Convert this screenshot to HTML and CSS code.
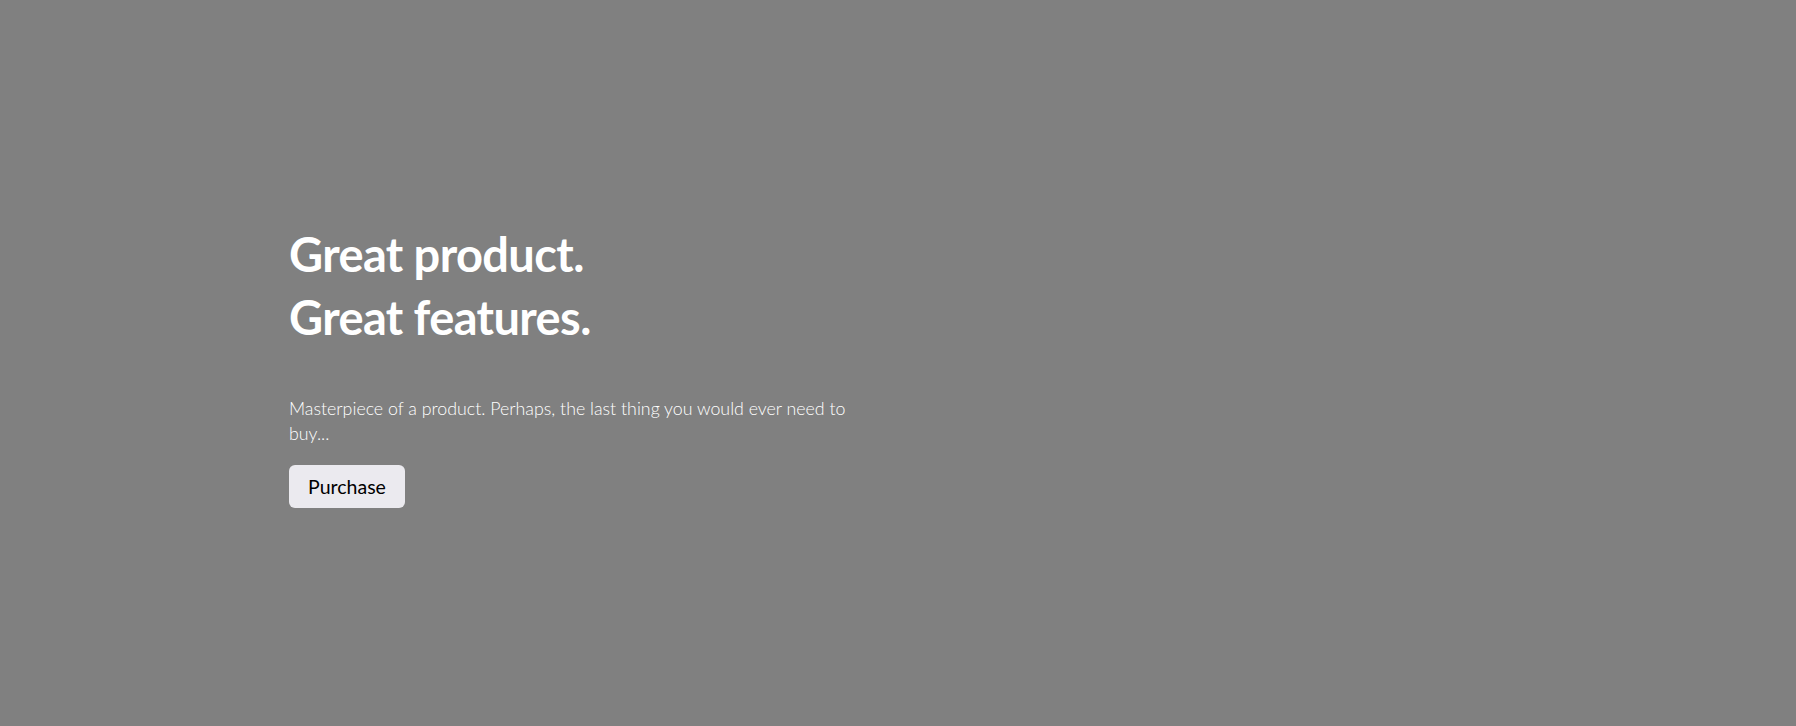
FILE: index.html
```html
<!DOCTYPE html>
<html lang="en">
<head>
<meta charset="utf-8">
<title>Great product</title>
<link rel="stylesheet" href="styles.css">
</head>
<body>
<section class="hero">
  <div class="hero-content">
    <h1 class="hero-title">Great product.<br>Great features.</h1>
    <p class="hero-text">Masterpiece of a product. Perhaps, the last thing you would ever need to buy...</p>
    <button class="hero-button" type="button">Purchase</button>
  </div>
</section>
</body>
</html>
```

FILE: styles.css
```css
* { box-sizing: border-box; }
html, body { margin: 0; padding: 0; }
body {
  background: #808080;
  font-family: "Lato", "Noto Sans", sans-serif;
  height: 100vh;
}
.hero {
  height: 100vh;
  display: flex;
  flex-direction: column;
  justify-content: center;
  padding-left: 289px;
}
.hero-content {
  width: 570px;
  display: flex;
  flex-direction: column;
  align-items: flex-start;
}
.hero-title {
  margin: 5px 0 47px 0;
  font-family: "Lato", sans-serif;
  font-weight: 700;
  font-size: 47px;
  line-height: 63px;
  color: #ffffff;
  letter-spacing: -0.6px;
}
.hero-text {
  margin: 0 0 19px 0;
  font-family: "Lato", sans-serif;
  font-weight: 300;
  font-size: 17.8px;
  line-height: 25px;
  color: #ffffff;
}
.hero-button {
  font-family: "Lato", sans-serif;
  font-size: 19.5px;
  color: #000;
  background: #ebeaef;
  border: none;
  border-radius: 6px;
  height: 43px;
  width: 116px;
  padding: 0;
  cursor: pointer;
}
```
